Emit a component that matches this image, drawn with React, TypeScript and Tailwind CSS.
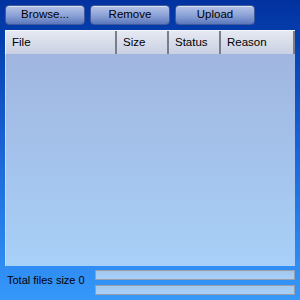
const font = { fontFamily: '"Liberation Sans", Arial, sans-serif' };

function Btn({ label }: { label: string }) {
  return (
    <button className="flex h-[20px] w-[80px] items-center justify-center rounded-[4px] border border-[#3f5a9a] bg-gradient-to-b from-[#b4c2e6] via-[#8ea4d8] to-[#5c78bc] text-[11.5px] leading-none text-black shadow-[inset_0_1px_0_rgba(255,255,255,0.5)]">
      {label}
    </button>
  );
}

function Head({ label, w }: { label: string; w: string }) {
  return (
    <div
      className={`flex h-full items-center border-r-2 border-[#7a7e88] pl-[6px] text-[11.5px] text-black ${w}`}
    >
      {label}
    </div>
  );
}

export default function App() {
  return (
    <div
      style={font}
      className="flex h-[300px] w-[300px] flex-col bg-gradient-to-b from-[#0232a0] via-[#1a64d8] to-[#3698fa] px-[5px] pt-[5px]"
    >
      <div className="flex gap-[5px]">
        <Btn label="Browse..." />
        <Btn label="Remove" />
        <Btn label="Upload" />
      </div>

      <div className="mt-[5px] flex h-[236px] flex-col">
        <div className="flex h-[24px] border-l border-t border-[#f4f6fa] bg-gradient-to-b from-[#e6e9f2] to-[#c9d0e2]">
          <Head label="File" w="w-[111px]" />
          <Head label="Size" w="w-[52px]" />
          <Head label="Status" w="w-[52px]" />
          <Head label="Reason" w="flex-1" />
        </div>
        <div className="flex-1 border-l border-[#c8daf4] bg-gradient-to-b from-[#a0b6e0] to-[#a8d0f8]" />
      </div>

      <div className="mt-[4px] flex">
        <div className="flex w-[90px] items-center pb-[5px] pl-[2px] text-[11px] text-black">
          Total files size 0
        </div>
        <div className="flex flex-1 flex-col gap-[5px]">
          <div className="h-[10px] border border-[#9a9ea6] bg-gradient-to-b from-[#a4c8f0] to-[#a8d0f8]" />
          <div className="h-[10px] border border-[#9a9ea6] bg-gradient-to-b from-[#a4c8f0] to-[#a8d0f8]" />
        </div>
      </div>
    </div>
  );
}
